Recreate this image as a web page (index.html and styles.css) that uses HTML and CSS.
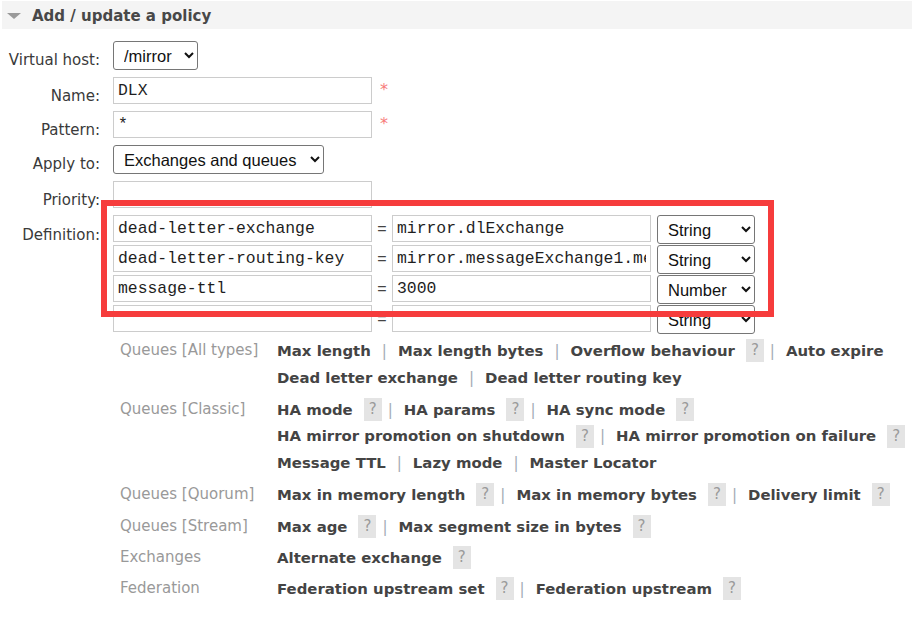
FILE: index.html
```html
<!DOCTYPE html>
<html>
<head>
<meta charset="utf-8">
<link rel="stylesheet" href="styles.css">
</head>
<body>
<div class="page">
  <div class="section-head"><span class="tri"></span><h2 class="title">Add / update a policy</h2></div>

  <div class="form">
    <label class="lbl">Virtual host:</label>
    <div class="field"><select class="sel sel-vhost"><option>/mirror</option></select></div>

    <label class="lbl">Name:</label>
    <div class="field"><input class="txt" type="text" value="DLX"><span class="mand">*</span></div>

    <label class="lbl">Pattern:</label>
    <div class="field"><input class="txt" type="text" value="*"><span class="mand">*</span></div>

    <label class="lbl">Apply to:</label>
    <div class="field"><select class="sel sel-apply"><option>Exchanges and queues</option></select></div>

    <label class="lbl">Priority:</label>
    <div class="field"><input class="txt" type="text" value=""></div>

    <label class="lbl lbl-def">Definition:</label>
    <div class="field">
      <div class="defs">
        <div class="def-row">
          <input class="txt" type="text" value="dead-letter-exchange"><span class="eq">=</span><input class="txt" type="text" value="mirror.dlExchange"><select class="sel sel-type"><option>String</option></select>
        </div>
        <div class="def-row">
          <input class="txt" type="text" value="dead-letter-routing-key"><span class="eq">=</span><input class="txt" type="text" value="mirror.messageExchange1.messageKey"><select class="sel sel-type"><option>String</option></select>
        </div>
        <div class="def-row">
          <input class="txt" type="text" value="message-ttl"><span class="eq">=</span><input class="txt" type="text" value="3000"><select class="sel sel-type"><option>Number</option></select>
        </div>
        <div class="def-row">
          <input class="txt" type="text" value=""><span class="eq">=</span><input class="txt" type="text" value=""><select class="sel sel-type"><option>String</option></select>
        </div>
      </div>

      <div class="help">
        <div class="help-group">
          <div class="help-lbl">Queues [All types]</div>
          <div class="help-links">
            <div class="line"><a class="lk">Max length</a><span class="sep">|</span><a class="lk">Max length bytes</a><span class="sep">|</span><a class="lk">Overflow behaviour</a><span class="q">?</span><span class="sep">|</span><a class="lk">Auto expire</a></div>
            <div class="line"><a class="lk">Dead letter exchange</a><span class="sep">|</span><a class="lk">Dead letter routing key</a></div>
          </div>
        </div>
        <div class="help-group">
          <div class="help-lbl">Queues [Classic]</div>
          <div class="help-links">
            <div class="line"><a class="lk">HA mode</a><span class="q">?</span><span class="sep">|</span><a class="lk">HA params</a><span class="q">?</span><span class="sep">|</span><a class="lk">HA sync mode</a><span class="q">?</span></div>
            <div class="line"><a class="lk">HA mirror promotion on shutdown</a><span class="q">?</span><span class="sep">|</span><a class="lk">HA mirror promotion on failure</a><span class="q">?</span></div>
            <div class="line"><a class="lk">Message TTL</a><span class="sep">|</span><a class="lk">Lazy mode</a><span class="sep">|</span><a class="lk">Master Locator</a></div>
          </div>
        </div>
        <div class="help-group">
          <div class="help-lbl">Queues [Quorum]</div>
          <div class="help-links">
            <div class="line"><a class="lk">Max in memory length</a><span class="q">?</span><span class="sep">|</span><a class="lk">Max in memory bytes</a><span class="q">?</span><span class="sep">|</span><a class="lk">Delivery limit</a><span class="q">?</span></div>
          </div>
        </div>
        <div class="help-group">
          <div class="help-lbl">Queues [Stream]</div>
          <div class="help-links">
            <div class="line"><a class="lk">Max age</a><span class="q">?</span><span class="sep">|</span><a class="lk">Max segment size in bytes</a><span class="q">?</span></div>
          </div>
        </div>
        <div class="help-group">
          <div class="help-lbl">Exchanges</div>
          <div class="help-links">
            <div class="line"><a class="lk">Alternate exchange</a><span class="q">?</span></div>
          </div>
        </div>
        <div class="help-group">
          <div class="help-lbl">Federation</div>
          <div class="help-links">
            <div class="line"><a class="lk">Federation upstream set</a><span class="q">?</span><span class="sep">|</span><a class="lk">Federation upstream</a><span class="q">?</span></div>
          </div>
        </div>
      </div>
    </div>
  </div>

  <div class="highlight"></div>
</div>
</body>
</html>
```

FILE: styles.css
```css
html, body {
  margin: 0;
  padding: 0;
  background: #ffffff;
}

body {
  font-family: "DejaVu Sans", Verdana, sans-serif;
  color: #484848;
}

.page {
  position: relative;
  width: 915px;
  height: 618px;
  overflow: hidden;
}

.section-head {
  display: flex;
  align-items: center;
  margin: 1px 3px 0 2px;
  height: 28px;
  background: #f4f4f4;
}

.tri {
  width: 0;
  height: 0;
  margin-left: 5px;
  margin-right: 11px;
  margin-top: 1px;
  border-left: 7px solid transparent;
  border-right: 7px solid transparent;
  border-top: 6px solid #9a9a9a;
}

.title {
  margin: 2px 0 0 0;
  font-size: 15px;
  font-weight: bold;
  color: #484848;
  line-height: 18px;
}

.form {
  display: grid;
  grid-template-columns: 100px 1fr;
  column-gap: 13px;
  row-gap: 7px;
  margin-top: 12px;
}

.lbl {
  text-align: right;
  font-size: 15px;
  line-height: 16px;
  padding-top: 11px;
  color: #3a3a3a;
  white-space: nowrap;
}

.lbl-def {
  padding-top: 12px;
}

.field {
  display: flex;
  flex-direction: column;
  align-items: flex-start;
}

.field:has(.mand) {
  flex-direction: row;
}

.txt {
  box-sizing: border-box;
  width: 259px;
  height: 27px;
  margin: 0;
  padding: 0 4px;
  border: 1px solid #cccccc;
  border-radius: 0;
  font-family: "Liberation Mono", "Courier New", monospace;
  font-size: 16.4px;
  color: #1e1e1e;
  background: #ffffff;
  outline: none;
}

.mand {
  margin-left: 8px;
  margin-top: 5px;
  font-size: 16px;
  line-height: 16px;
  color: #f77b7b;
}

.sel {
  box-sizing: border-box;
  height: 29px;
  margin: 0;
  padding: 0 2px 0 6px;
  border: 1px solid #767676;
  border-radius: 3px;
  background: #ffffff;
  font-family: "Liberation Sans", Arial, sans-serif;
  font-size: 16.5px;
  color: #111111;
}

.sel-vhost { width: 85px; }
.sel-apply { width: 211px; }
.sel-type { width: 98px; margin-left: 6px; }

.defs {
  display: flex;
  flex-direction: column;
}

.def-row {
  display: flex;
  align-items: flex-start;
  height: 30px;
}

.eq {
  width: 20px;
  text-align: center;
  font-family: "Liberation Sans", Arial, sans-serif;
  font-size: 16px;
  line-height: 28px;
  color: #444444;
}

.help {
  display: flex;
  flex-direction: column;
  row-gap: 5px;
  margin-left: 7px;
  margin-top: 2px;
}

.help-group {
  display: grid;
  grid-template-columns: 157px auto;
}

.help-group:nth-child(n+5) {
  margin-top: -1px;
}

.help-lbl {
  font-size: 15px;
  line-height: 26px;
  color: #999999;
  white-space: nowrap;
}

.line {
  display: flex;
  align-items: center;
  height: 27px;
  white-space: nowrap;
}

.help-group:nth-child(2) .line:nth-child(2) {
  height: 26px;
}

.lk {
  font-size: 14.9px;
  font-weight: bold;
  color: #444444;
}

.sep {
  margin: 0 11px;
  font-size: 15px;
  color: #a3acb5;
}

.q {
  box-sizing: border-box;
  display: inline-block;
  width: 18px;
  height: 23px;
  margin-left: 11px;
  line-height: 23px;
  text-align: center;
  font-size: 15px;
  color: #9a9a9a;
  background: #e4e4e4;
}

.q + .sep {
  margin-left: 6px;
}

.highlight {
  position: absolute;
  left: 101px;
  top: 200px;
  width: 673px;
  height: 117px;
  box-sizing: border-box;
  border: 6px solid #f63c3c;
  pointer-events: none;
}
```
